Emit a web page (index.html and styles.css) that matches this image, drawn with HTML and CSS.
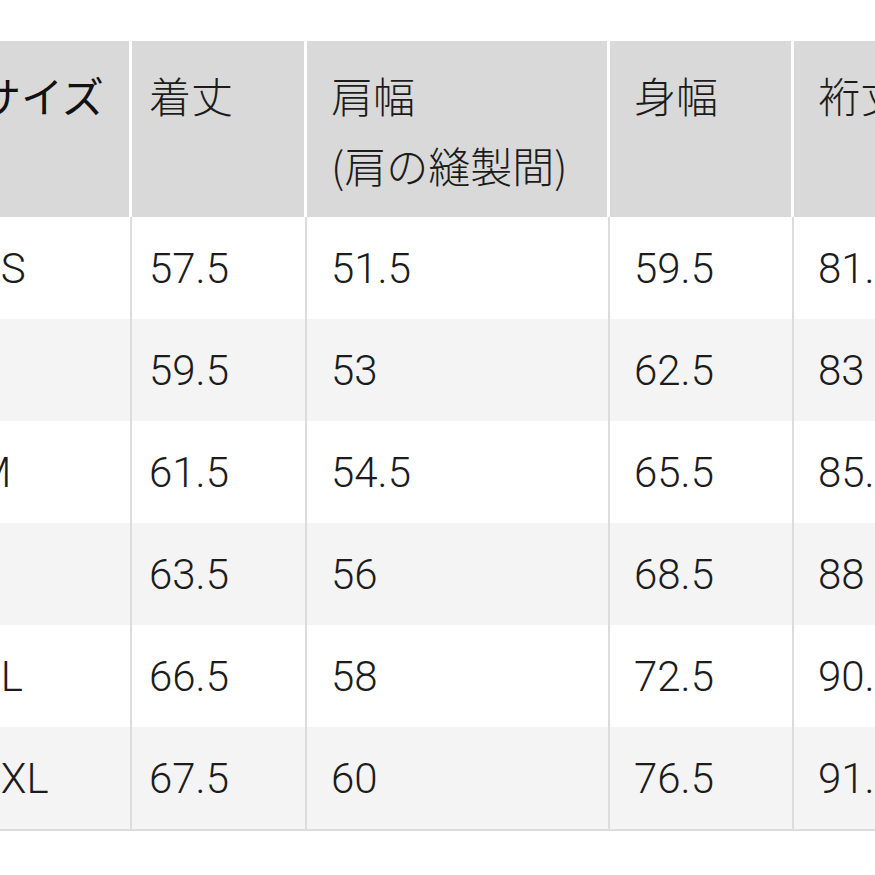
FILE: index.html
```html
<!DOCTYPE html>
<html lang="ja">
<head>
<meta charset="utf-8">
<title>サイズ表</title>
<link rel="stylesheet" href="styles.css">
</head>
<body>
<div class="frame">
  <table class="size-table">
    <thead>
      <tr>
        <th class="c1">サイズ</th>
        <th class="c2">着丈</th>
        <th class="c3">肩幅<br>(肩の縫製間)</th>
        <th class="c4">身幅</th>
        <th class="c5">裄丈</th>
      </tr>
    </thead>
    <tbody>
      <tr><td class="c1">XS</td><td class="c2">57.5</td><td class="c3">51.5</td><td class="c4">59.5</td><td class="c5">81.5</td></tr>
      <tr><td class="c1">S</td><td class="c2">59.5</td><td class="c3">53</td><td class="c4">62.5</td><td class="c5">83</td></tr>
      <tr><td class="c1">M</td><td class="c2">61.5</td><td class="c3">54.5</td><td class="c4">65.5</td><td class="c5">85.5</td></tr>
      <tr><td class="c1">L</td><td class="c2">63.5</td><td class="c3">56</td><td class="c4">68.5</td><td class="c5">88</td></tr>
      <tr><td class="c1">XL</td><td class="c2">66.5</td><td class="c3">58</td><td class="c4">72.5</td><td class="c5">90.5</td></tr>
      <tr><td class="c1">XXL</td><td class="c2">67.5</td><td class="c3">60</td><td class="c4">76.5</td><td class="c5">91.5</td></tr>
    </tbody>
  </table>
</div>
</body>
</html>
```

FILE: styles.css
```css
html, body {
  margin: 0;
  padding: 0;
  background: #ffffff;
}

.frame {
  width: 875px;
  height: 875px;
  overflow: hidden;
  padding-top: 41px;
  box-sizing: border-box;
}

.size-table {
  margin-left: -51px;
  border-collapse: separate;
  border-spacing: 0;
  table-layout: fixed;
  width: 1045px;
  font-family: Roboto, "Noto Sans CJK JP", "Noto Sans", sans-serif;
  font-weight: 300;
  font-size: 42px;
  color: #1c1c1c;
  border-bottom: 2px solid #dcdcdc;
}

.size-table th,
.size-table td {
  box-sizing: border-box;
  text-align: left;
  padding: 0 0 0 24px;
  white-space: nowrap;
}

.size-table th {
  height: 176px;
  vertical-align: top;
  font-weight: 300;
  line-height: 70px;
  padding-top: 19px;
  background: #d9d9d9;
  border-right: 3px solid #ffffff;
  font-family: "Noto Sans CJK JP", sans-serif;
}

.size-table th.c1 {
  font-weight: 400;
  color: #111111;
}

.size-table td {
  height: 102px;
  vertical-align: middle;
  border-right: 2px solid #dcdcdc;
}

.size-table tbody tr:nth-child(even) td {
  background: #f4f4f4;
}

.size-table .c1 { width: 183px; padding-left: 26px; }
.size-table th.c1 { padding-left: 30px; }
.size-table .c2 { width: 175px; padding-left: 17px; }
.size-table .c3 { width: 303px; }
.size-table .c4 { width: 184px; }
.size-table .c5 { width: 200px; }
```
